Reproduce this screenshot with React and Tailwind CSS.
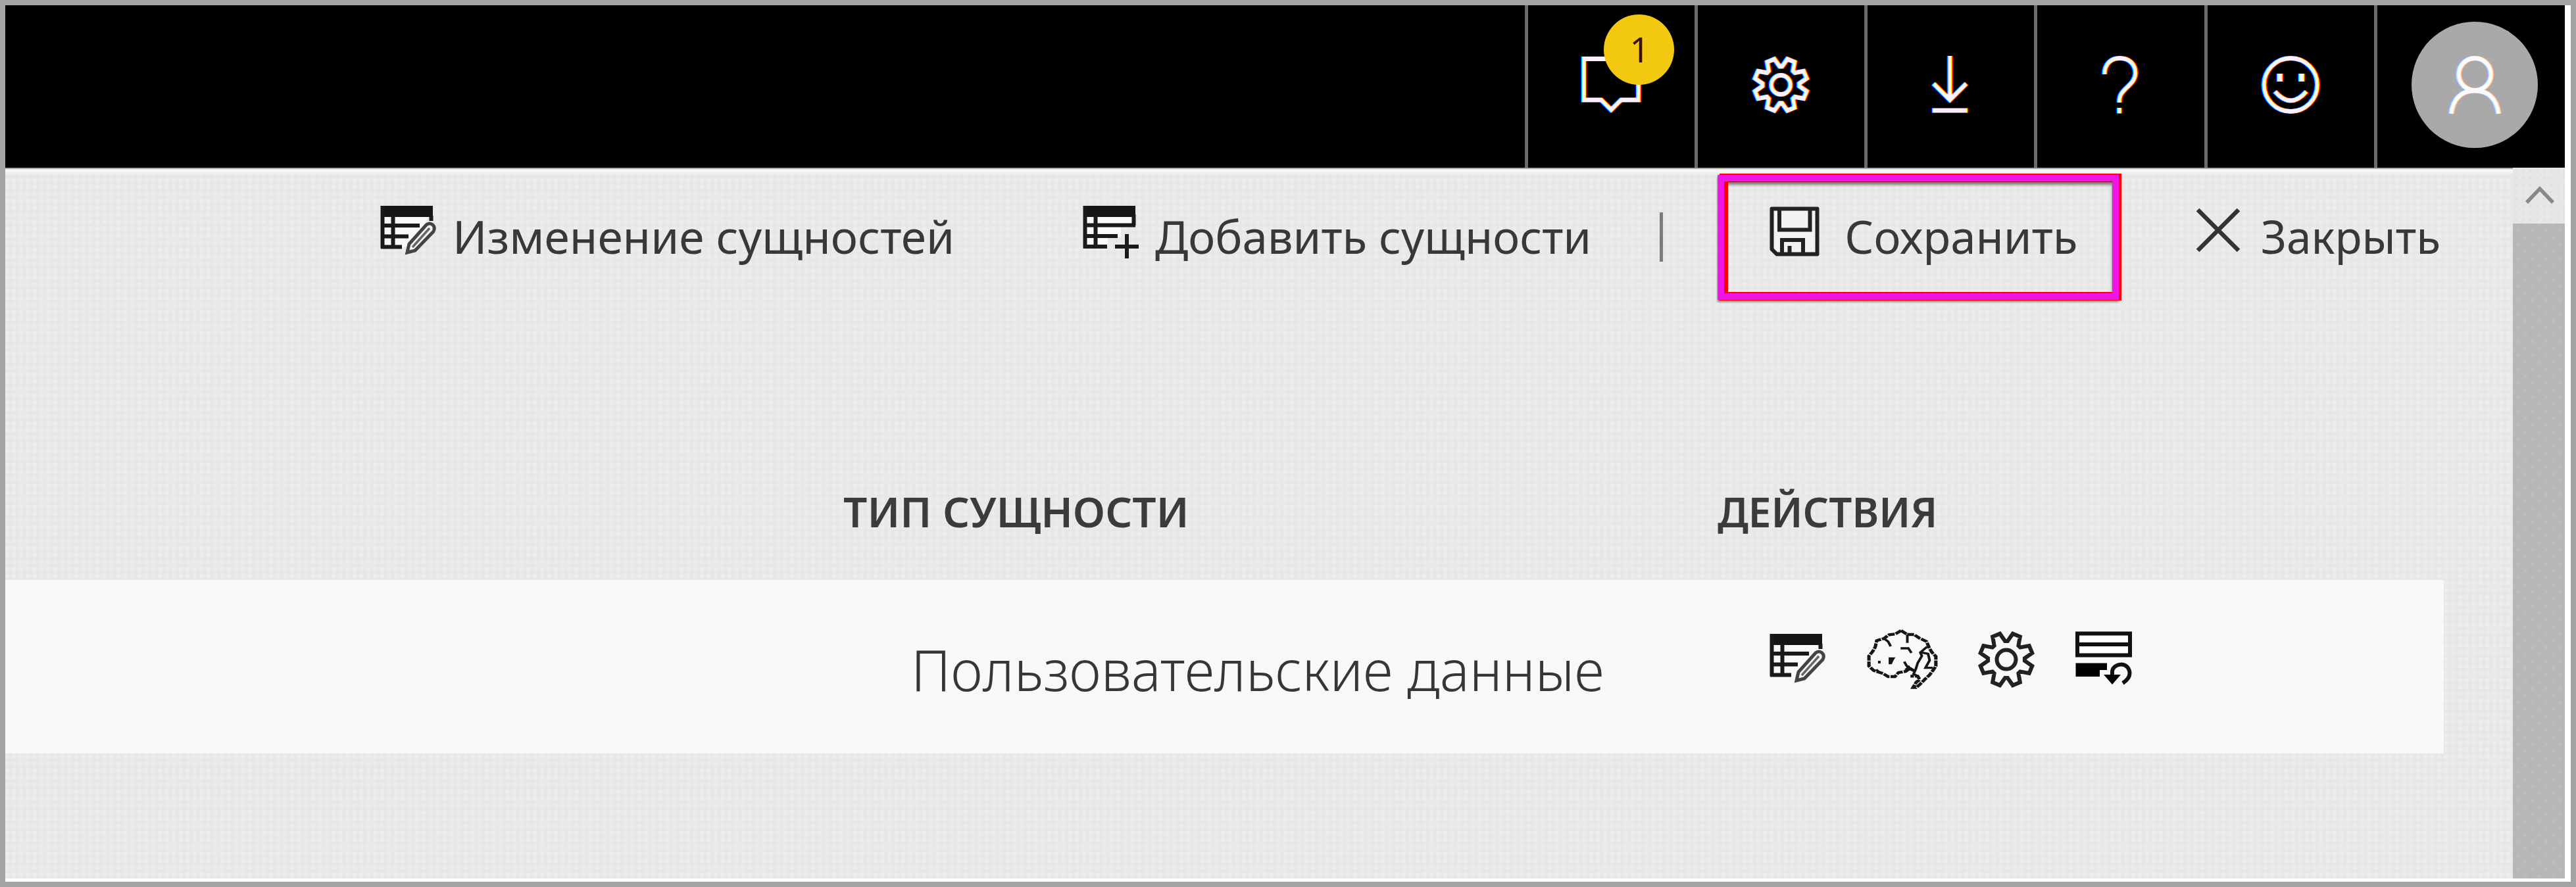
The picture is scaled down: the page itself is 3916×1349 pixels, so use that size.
import React from "react";

const point = (r, deg) => {
  const a = (deg * Math.PI) / 180;
  return `${(r * Math.sin(a)).toFixed(2)},${(-r * Math.cos(a)).toFixed(2)}`;
};

const gearPoints = Array.from({ length: 8 }, (_, k) => {
  const d = k * 45;
  return [point(28, d - 4), point(28, d + 4), point(40.5, d + 14), point(40.5, d + 31)].join(" ");
}).join(" ");

function Gear() {
  return (
    <>
      <polygon points={gearPoints} />
      <circle r="14.5" />
    </>
  );
}

/* Header glyph drawn as three colour channels with a small horizontal offset. */
function Glyph({ children }) {
  return (
    <svg viewBox="-60 -60 120 120" className="mb-[5px] h-[120px] w-[120px] shrink-0" fill="none" strokeWidth="7">
      <g className="mix-blend-screen" stroke="#ff0000" transform="translate(1.5 0)">{children}</g>
      <g className="mix-blend-screen" stroke="#00f000">{children}</g>
      <g className="mix-blend-screen" stroke="#0000ff" transform="translate(-1.5 0)">{children}</g>
    </svg>
  );
}

function HeaderCell({ children }) {
  return (
    <div className="flex w-[258.3px] shrink-0 items-center justify-center border-l-5 border-[#6b6b6b]">
      {children}
    </div>
  );
}

function TableEditIcon() {
  return (
    <svg viewBox="0 0 92 84" className="h-[84px] w-[92px] shrink-0" fill="none" stroke="#1a1a1a">
      <path d="M8 20H77V16L60 50L40 66H8Z" fill="#fafafa" stroke="none" />
      <rect x="3" y="3" width="79" height="17" fill="#161616" stroke="none" />
      <path d="M5.5 3V67.500M21.500 18V67.500M3 33H62M3 49.500H45M3 65.500H35M79.500 18V26" strokeWidth="6" />
      <path d="M43 74L46 61L72 32Q77 28 82 32Q86 36 83 42L55 71Z" fill="#f4f4f4" stroke="#444" strokeWidth="5" />
      <path d="M51 66L77 37" stroke="#666" strokeWidth="3.500" />
    </svg>
  );
}

function TableAddIcon() {
  return (
    <svg viewBox="0 0 92 84" className="h-[84px] w-[92px] shrink-0 overflow-visible" fill="none" stroke="#1a1a1a">
      <path d="M8 20H78V35H60V50H40V64H8Z" fill="#fafafa" stroke="none" />
      <rect x="3" y="3" width="79" height="17" fill="#161616" stroke="none" />
      <path d="M5.500 3V67.500M21.500 18V67.500M3 32.500H82M3 49H55M3 65H39M79.500 16V33" strokeWidth="6" />
      <path d="M51 65H87M69 46V83" strokeWidth="6" />
    </svg>
  );
}

function SaveIcon() {
  return (
    <svg viewBox="0 0 80 80" className="mb-[15px] h-20 w-20 shrink-0" fill="none" stroke="#222" strokeWidth="6">
      <path d="M5.500 5.500H74.500V74.500H13L5.500 67Z" fill="#f2f2f2" strokeLinejoin="round" />
      <path d="M17 5.500V37.500H63.500V5.500M21 74V53H53V74M32.500 74V62" />
    </svg>
  );
}

function BrainIcon() {
  return (
    <svg viewBox="445 60 284 300" preserveAspectRatio="none" className="h-[100px] w-[112px] shrink-0" fill="none" stroke="#161616">
      <g strokeWidth="13" strokeDasharray="26 4">
        <path d="M582 84L560 100L536 103L516 120L488 130L482 160L472 180L458 200V246L476 266L492 272L512 280L532 294H558L572 276L600 270L616 256L632 268" />
        <path d="M582 84L606 102L632 102L652 118L680 134L690 162L700 182L716 202V246L706 264L692 286L674 306L656 328L640 344H628L640 320L654 308L646 292H618" />
      </g>
      <g strokeWidth="10">
        <path d="M606 102V140M516 120L532 134L542 156M580 165H610L622 186M594 226L604 246L622 262M638 262L646 232L662 200L656 184L682 158M662 184L686 190L692 220L676 254H704M638 262L630 282L648 294M486 262L500 276M498 222V234" />
      </g>
      <path d="M534 206H560L552 222L546 238H534ZM594 262L612 242L634 270Z" fill="#161616" stroke="none" />
    </svg>
  );
}

function RefreshIcon() {
  return (
    <svg viewBox="0 0 90 84" className="h-[84px] w-[90px] shrink-0" fill="none" stroke="#111" strokeWidth="6">
      <path d="M5 5.500H85V38.500H5ZM5 22H85" fill="#fff" />
      <path d="M2.500 50.500H50V61H39V71H2.500Z" fill="#000" stroke="none" />
      <path d="M58 69V64C58 50 84 47 84.500 66Q84.500 74 74 81" />
      <path d="M45 68H71L58 83Z" fill="#000" stroke="none" />
    </svg>
  );
}

function Label({ className, children }) {
  return (
    <span className={`block shrink-0 origin-left whitespace-nowrap text-[70px] leading-[90px] text-[#383838] ${className}`}>
      {children}
    </span>
  );
}

function Header() {
  return (
    <header className="flex h-[247px] shrink-0 bg-black">
      <div className="flex-1" />
      <HeaderCell>
        <div className="relative">
          <Glyph>
            <path d="M-41.500 -39.500H41.500V23H15L0 38L-15 23H-41.500Z" />
          </Glyph>
          <span className="absolute top-[-47px] left-[49px] flex h-[107px] w-[107px] items-center justify-center rounded-full bg-[#f2c811] pb-[2px] pl-[2px] text-[53px] leading-none text-[#3a1010]">
            1
          </span>
        </div>
      </HeaderCell>
      <HeaderCell>
        <Glyph><Gear /></Glyph>
      </HeaderCell>
      <HeaderCell>
        <Glyph>
          <path d="M-2 -44V23M-27 -2L-2 23L23 -2M-29 39H25" />
        </Glyph>
      </HeaderCell>
      <HeaderCell>
        <Glyph>
          <path d="M-25 -16C-25 -32 -15 -40.500 -2 -40.500C13 -40.500 22 -31 22 -18C22 -7 14 -1 7 6C-1 14 -2.500 18 -2.500 27M-2.500 35V43.500" />
        </Glyph>
      </HeaderCell>
      <HeaderCell>
        <Glyph>
          <circle r="40.500" />
          <path d="M-16.500 -17V-5M16.500 -17V-5" strokeWidth="9" />
          <path d="M-24 10Q-12 24 0 24Q12 24 24 10" />
        </Glyph>
      </HeaderCell>
      <div className="flex w-[290px] shrink-0 items-center border-l-5 border-[#6b6b6b] pl-[52px]">
        <div className="mb-[5px] flex h-[192px] w-[192px] items-center justify-center rounded-full bg-[#a9a9a9]">
          <Glyph>
            <circle cy="-14" r="24.500" />
            <path d="M-36 46C-33 22 -20 11 0 11C20 11 33 22 36 46" />
          </Glyph>
        </div>
      </div>
    </header>
  );
}

function Toolbar() {
  return (
    <div className="flex h-[208px] items-center">
      <button className="ml-[568px] flex items-center">
        <span className="mb-[14px]"><TableEditIcon /></span>
        <Label className="ml-5 w-[770px] scale-x-[0.991]">Изменение сущностей</Label>
      </button>
      <button className="ml-[186px] flex items-center">
        <span className="mb-[14px]"><TableAddIcon /></span>
        <Label className="ml-5 w-[673px] scale-x-[0.985]">Добавить сущности</Label>
      </button>
      <div className="mt-[3px] ml-[94px] h-[75px] w-[5px] bg-[#7c7c7c]" />
      <button className="relative mt-1 ml-[83px] flex h-[190px] w-[610px] shrink-0 items-center border-[10px] border-[#f014e6] pb-1 pl-[67px] shadow-[0_3px_3px_#777,inset_0_5px_4px_#777]">
        <span className="absolute -top-[12px] -right-[14px] -bottom-[11px] -left-[17px] ml-[10px] border-[13px] border-t-[13px] border-r-[14px] border-[#ff0000] border-t-[#900010]" />
        <span className="absolute -inset-[10px] border-[10px] border-[#f014e6]" />
        <span className="absolute -top-[12px] -right-[14px] -left-[7px] h-[2px] bg-[#ff0000]" />
        <SaveIcon />
        <Label className="ml-9 w-[360px] scale-x-[0.985]">Сохранить</Label>
      </button>
      <button className="ml-[116px] flex items-center">
        <svg viewBox="0 0 70 70" className="mb-[18px] h-[70px] w-[70px] shrink-0" stroke="#333" strokeWidth="6.500">
          <path d="M4 4L66 66M66 4L4 66" />
        </svg>
        <Label className="ml-[30px] w-[283px] scale-x-[0.965]">Закрыть</Label>
      </button>
    </div>
  );
}

function EntityTable() {
  return (
    <section className="mt-[211px]">
      <div className="flex h-[208px] items-center pl-[1274px] text-[64px] leading-[80px] font-semibold text-[#3b3b3b]">
        <span className="w-[1329px] origin-left">ТИП СУЩНОСТИ</span>
        <span className="w-[345px] origin-left scale-x-[0.966]">ДЕЙСТВИЯ</span>
      </div>
      <div className="flex h-[264px] w-[3707px] items-center bg-[#f8f8f8] pl-[1377px]">
        <span className="mt-[6px] block w-[1303px] origin-left scale-x-[0.969] text-[87px] leading-[110px] font-[350] whitespace-nowrap text-[#363636]">
          Пользовательские данные
        </span>
        <div className="mb-[22px] flex items-center">
          <TableEditIcon />
          <span className="mb-[5px] ml-[56px]"><BrainIcon /></span>
          <svg viewBox="-46 -46 92 92" className="ml-[55.500px] h-[92px] w-[92px] shrink-0" fill="none" stroke="#222" strokeWidth="6">
            <Gear />
          </svg>
          <span className="mb-[6px] ml-[57px]"><RefreshIcon /></span>
        </div>
      </div>
    </section>
  );
}

function Scrollbar() {
  return (
    <aside className="flex w-[79px] shrink-0 flex-col">
      <div className="flex h-[85px] justify-center bg-[#e6e6e6] bg-[radial-gradient(circle,#dedede_0,transparent_3px)] bg-size-[10.570px_10.570px] pt-[25px] pl-[3px]">
        <svg viewBox="0 0 50 32" className="h-8 w-[50px]" fill="none" stroke="#888" strokeWidth="5.500">
          <path d="M5 28L25 7L45 28" />
        </svg>
      </div>
      <div className="flex-1 bg-[#b7b7b7] bg-[radial-gradient(circle,#c0c0c0_0,transparent_4px),radial-gradient(circle,#c0c0c0_0,transparent_4px)] bg-size-[21.140px_21.140px] bg-position-[-2px_0px,8.570px_10.570px]" />
    </aside>
  );
}

export default function App() {
  return (
    <div className="h-[1349px] w-[3916px] overflow-hidden border-8 border-[#a3a3a3] bg-white pr-[9px] pb-[5px] font-['Noto_Sans','Open_Sans',sans-serif]">
      <div className="flex h-full flex-col">
        <Header />
        <div className="flex min-h-0 flex-1">
          <main className="flex-1 bg-[#e7e7e7] bg-[linear-gradient(#777_0,#fafafa_3px,#f5f5f5_6px,transparent_11px),radial-gradient(circle,#efefef_0,transparent_5px)] bg-size-[100%_11px,10.570px_10.570px] bg-position-[0_0,-2.600px_3.100px] [background-repeat:no-repeat,repeat]">
            <Toolbar />
            <EntityTable />
          </main>
          <Scrollbar />
        </div>
      </div>
    </div>
  );
}
